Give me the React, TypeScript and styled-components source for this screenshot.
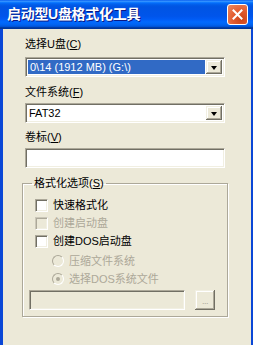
import React from "react";
import styled, { createGlobalStyle } from "styled-components";

const FONT = `"Liberation Sans", "Noto Sans CJK SC", sans-serif`;

const Global = createGlobalStyle`
  html, body { margin: 0; padding: 0; background: #ECE9D8; }
  body { width: 253px; height: 345px; overflow: hidden; }
  * { box-sizing: border-box; }
`;

const Window = styled.div`
  width: 253px;
  height: 345px;
  display: flex;
  flex-direction: column;
  font-family: ${FONT};
  font-size: 11px;
  color: #000;
  background: #0842c7;
`;

const TitleBar = styled.div`
  height: 29px;
  flex: none;
  display: flex;
  align-items: center;
  justify-content: space-between;
  padding: 0 5px 1px 7px;
  background: linear-gradient(
    #0058ee 0%, #3a93ff 4%, #288eff 6%, #127dff 8%, #036ffc 10%,
    #0262ee 14%, #0057e5 20%, #0054e3 24%, #0055eb 56%, #005bf5 66%,
    #026afe 76%, #0062ef 86%, #0052d6 92%, #0040ab 94%, #003092 100%
  );
`;

const Title = styled.span`
  color: #fff;
  font-weight: bold;
  font-size: 14px;
  line-height: 16px;
  letter-spacing: -0.3px;
  text-shadow: 1px 1px #0a1883;
`;

const CloseButton = styled.div`
  width: 21px;
  height: 21px;
  border: 1px solid #fff;
  border-radius: 3px;
  background: radial-gradient(circle at 70% 75%, #cc4418 0%, #e35c30 45%, #ed8a62 100%);
  display: flex;
  align-items: center;
  justify-content: center;
  margin-top: 1px;
`;

const Frame = styled.div`
  flex: 1;
  display: flex;
  border-left: 3px solid #0a47d6;
  border-right: 2px solid #0a47d6;
`;

const Client = styled.div`
  flex: 1;
  background: #ece9d8;
  padding: 8px 26px 0 22px;
  display: flex;
  flex-direction: column;
`;

const Label = styled.div<{ $mt?: number }>`
  height: 14px;
  line-height: 14px;
  margin-top: ${(p) => p.$mt ?? 0}px;
  white-space: nowrap;
`;

const Key = styled.span`
  text-decoration: underline;
`;

const sunken = `
  border: 1px solid;
  border-color: #aca899 #ffffff #ffffff #aca899;
  box-shadow: inset 1px 1px #716f64, inset -1px -1px #f1efe2;
`;

const Combo = styled.div<{ $mt: number }>`
  height: 20px;
  margin-top: ${(p) => p.$mt}px;
  ${sunken}
  background: #fff;
  display: flex;
  align-items: stretch;
  padding: 2px;
`;

const ComboValue = styled.div<{ $selected?: boolean }>`
  flex: 1;
  display: flex;
  align-items: center;
  padding-left: ${(p) => (p.$selected ? 2 : 1)}px;
  margin-right: 1px;
  background: ${(p) => (p.$selected ? "#316ac5" : "transparent")};
  color: ${(p) => (p.$selected ? "#fff" : "#000")};
  white-space: nowrap;
  overflow: hidden;
`;

const raised = `
  background: #ece9d8;
  box-shadow: inset -1px -1px #716f64, inset 1px 1px #f1efe2, inset -2px -2px #aca899, inset 2px 2px #ffffff;
`;

const DropButton = styled.div`
  width: 16px;
  flex: none;
  ${raised}
  display: flex;
  align-items: center;
  justify-content: center;
`;

const Arrow = styled.div`
  width: 0;
  height: 0;
  border-left: 3.5px solid transparent;
  border-right: 3.5px solid transparent;
  border-top: 4px solid #000;
  margin-top: 1px;
`;

const TextBox = styled.div<{ $mt?: number; $disabled?: boolean; $grow?: boolean }>`
  height: 20px;
  margin-top: ${(p) => p.$mt ?? 0}px;
  flex: ${(p) => (p.$grow ? 1 : "none")};
  ${sunken}
  background: ${(p) => (p.$disabled ? "#ece9d8" : "#fff")};
`;

const Group = styled.fieldset`
  margin: 8px -3px 0 -3px;
  padding: 6px 6px 6px 6px;
  border: 1px solid #aca899;
  box-shadow: 1px 1px #fff, inset 1px 1px #fff;
  min-width: 0;
  display: flex;
  flex-direction: column;
`;

const Legend = styled.legend`
  padding: 0 2px;
  margin-left: 3px;
  height: 14px;
  line-height: 14px;
`;

const OptionRow = styled.div<{ $indent: number; $disabled?: boolean; $mt?: number }>`
  height: 18px;
  display: flex;
  align-items: center;
  padding-left: ${(p) => p.$indent}px;
  margin-top: ${(p) => p.$mt ?? 0}px;
  gap: 5px;
  color: ${(p) => (p.$disabled ? "#aca899" : "#000")};
  white-space: nowrap;
  line-height: 14px;
`;

const CheckBox = styled.div<{ $disabled?: boolean }>`
  width: 13px;
  height: 13px;
  flex: none;
  border: 1px solid;
  border-color: ${(p) => (p.$disabled ? "#cbc7b8 #fff #fff #cbc7b8" : "#aca899 #fff #fff #aca899")};
  box-shadow: ${(p) =>
    p.$disabled ? "inset 1px 1px #aca899, inset -1px -1px #f1efe2" : "inset 1px 1px #716f64, inset -1px -1px #f1efe2"};
  background: ${(p) => (p.$disabled ? "#ece9d8" : "#fff")};
`;

const Radio = styled.div`
  width: 12px;
  height: 12px;
  flex: none;
  border-radius: 50%;
  border: 1px solid;
  border-color: #aca899 #fff #fff #aca899;
  background: #ece9d8;
  display: flex;
  align-items: center;
  justify-content: center;
`;

const Dot = styled.div`
  width: 4px;
  height: 4px;
  border-radius: 50%;
  background: #aca899;
`;

const BrowseRow = styled.div`
  display: flex;
  align-items: center;
  gap: 10px;
  margin-top: 2px;
  padding-right: 6px;
`;

const BrowseButton = styled.div`
  width: 20px;
  height: 20px;
  flex: none;
  ${raised}
  color: #aca899;
  display: flex;
  align-items: flex-end;
  justify-content: center;
  padding-bottom: 4px;
  font-size: 9px;
  line-height: 9px;
  letter-spacing: -0.5px;
`;

export default function App() {
  return (
    <Window>
      <Global />
      <TitleBar>
        <Title>启动型U盘格式化工具</Title>
        <CloseButton>
          <svg width="11" height="11" viewBox="0 0 11 11">
            <path d="M1.5 1.5 L9.5 9.5 M9.5 1.5 L1.5 9.5" stroke="#fff" strokeWidth="2" strokeLinecap="square" />
          </svg>
        </CloseButton>
      </TitleBar>
      <Frame>
        <Client>
          <Label>
            选择U盘(<Key>C</Key>)
          </Label>
          <Combo $mt={6}>
            <ComboValue $selected>0\14 (1912 MB) (G:\)</ComboValue>
            <DropButton>
              <Arrow />
            </DropButton>
          </Combo>
          <Label $mt={8}>
            文件系统(<Key>F</Key>)
          </Label>
          <Combo $mt={4}>
            <ComboValue>FAT32</ComboValue>
            <DropButton>
              <Arrow />
            </DropButton>
          </Combo>
          <Label $mt={7}>
            卷标(<Key>V</Key>)
          </Label>
          <TextBox $mt={4} />
          <Group>
            <Legend>
              格式化选项(<Key>S</Key>)
            </Legend>
            <OptionRow $indent={6}>
              <CheckBox />
              快速格式化
            </OptionRow>
            <OptionRow $indent={6} $disabled>
              <CheckBox $disabled />
              创建启动盘
            </OptionRow>
            <OptionRow $indent={6}>
              <CheckBox />
              创建DOS启动盘
            </OptionRow>
            <OptionRow $indent={23} $disabled $mt={2}>
              <Radio />
              压缩文件系统
            </OptionRow>
            <OptionRow $indent={23} $disabled>
              <Radio>
                <Dot />
              </Radio>
              选择DOS系统文件
            </OptionRow>
            <BrowseRow>
              <TextBox $disabled $grow />
              <BrowseButton>...</BrowseButton>
            </BrowseRow>
          </Group>
        </Client>
      </Frame>
    </Window>
  );
}
